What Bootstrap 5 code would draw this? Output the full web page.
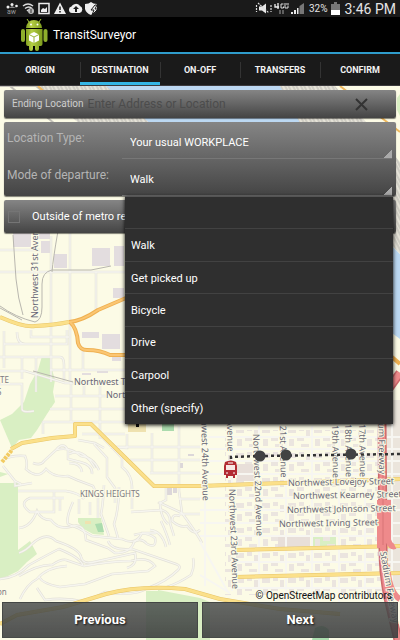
<!DOCTYPE html>
<html lang="en">
<head>
<meta charset="utf-8">
<meta name="viewport" content="width=device-width, initial-scale=1">
<title>TransitSurveyor</title>
<link href="https://cdn.jsdelivr.net/npm/bootstrap@5.3.0/dist/css/bootstrap.min.css" rel="stylesheet">
<style>
  body { font-family: Roboto, "Liberation Sans", sans-serif; font-size: 11px; line-height: 16px; background: #000; color: #fff; }
  .status-bar { height: 17px; background: #1a1a1a; font-size: 10px; color: #e4e4e4; }
  .status-bar .clock { font-size: 14px; }
  .app-bar { height: 37px; background: #000; border-bottom: 2px solid #2f9ccb; font-size: 12px; }
  .tab-strip { height: 32px; background: #1a1a1a; border-bottom: 1px solid #3c3a3d; }
  .tab-strip .nav-item { position: relative; flex: 1 1 0; }
  .tab-strip .nav-item + .nav-item::before { content: ""; position: absolute; left: 0; top: 8px; bottom: 7px; width: 1px; background: #333; }
  .tab-strip .nav-link { color: #f2f2f2; font-size: 9px; font-weight: 700; border-top: 3px solid transparent; border-bottom: 3px solid transparent; border-radius: 0; }
  .tab-strip .nav-link.active { border-bottom-color: #33b5e5; }
  .map-canvas { position: absolute; inset: 0; width: 100%; height: 100%; }
  .panel { background: linear-gradient(#858585, #444); border-radius: 2px; box-shadow: 0 1px 1px rgba(0,0,0,.5); }
  .panel-address { height: 28px; }
  .address-label { color: #cdcdcd; font-size: 10px; }
  .address-input { background: none; border: 0; color: #fff; font-size: 12px; outline-offset: -2px; }
  .address-input::placeholder { color: #4c4c4c; opacity: 1; }
  .spinner-grid { display: grid; grid-template-columns: 118px 1fr; grid-auto-rows: 37px; }
  .spinner-grid label { color: #b4b4b4; font-size: 12px; padding: 8px 0 0 3px; }
  .spinner-select { appearance: none; border: 0; border-bottom: 1px solid #777; color: #fff; font-size: 11px; padding: 6px 8px 0;
    background: linear-gradient(135deg, transparent 50%, #aaa 50%) right bottom / 8px 8px no-repeat; }
  .spinner-select option { color: #fff; background: #2f2f2f; }
  .choice-list { position: absolute; left: 121px; right: 3px; top: 100%; z-index: 5; display: grid; grid-template-rows: repeat(7, 1fr); height: 228px;
    background: #2f2f2f; box-shadow: 0 1px 4px #000; border-top: 1px solid #555; }
  .choice-list button { background: none; border: 0; border-bottom: 1px solid #424242; color: #fff; text-align: left; padding: 2px 6px 0; }
  .choice-list button:last-child { border-bottom: 0; }
  .panel-check { height: 33px; }
  .metro-check { appearance: none; width: 12px; height: 12px; border: 1px solid #757575; margin: 0; }
  .metro-check:checked { background: #33b5e5; }
  .attribution { color: #111; font-size: 10px; line-height: 12px; }
  .button-row { gap: 4px; padding: 0 2px 2px; }
  .nav-button { height: 36px; border: 1px solid rgba(65,68,66,.8); background: linear-gradient(rgba(72,76,76,.84), rgba(58,60,60,.88)); color: #fff; font-size: 13px; font-weight: 700; text-shadow: 1px 1px 2px #111; }
  .map-label { font-family: "Noto Sans", "Open Sans", sans-serif; font-size: 9px; fill: #686777; stroke: #fcfbe6; stroke-width: 2px; paint-order: stroke; }
  .district-label { font-size: 8px; fill: #7c7a82; }
</style>
<script src="https://cdn.jsdelivr.net/npm/bootstrap@5.3.0/dist/js/bootstrap.bundle.min.js"></script>
</head>
<body class="d-flex flex-column min-vh-100 overflow-x-hidden">

<div class="status-bar d-flex align-items-center justify-content-between ps-1 pe-1">
  <svg width="98" height="17" viewBox="4 0 98 17" fill="#eee" aria-hidden="true">
    <circle cx="8" cy="7" r="1.5"/><circle cx="12" cy="4.500" r="1.500"/><circle cx="16.500" cy="6" r="1.300"/><path d="M9 8l3-2 4 2z" opacity=".5"/>
    <text x="7" y="14" font-size="7" fill="#999">aw</text>
    <g fill="none" stroke="#ddd" stroke-width="1.500"><path d="M23 6q5-4 10 0M25 8.500q4-3 7 0M27 11q2-2 4 0"/></g>
    <circle cx="31" cy="11" r="3" fill="#bbb"/><path d="M31 9v4" stroke="#333"/>
    <path d="M39 3.500h10v10H39z" fill="none" stroke="#eee" stroke-width="1.500"/><path d="M41 12V10l2-2 2 1 2-2v5z"/>
    <path d="M60 2.500L66 14H54z"/><path d="M60 6.500v3.500M60 11v1.500" stroke="#1a1a1a" stroke-width="1.500"/>
    <path d="M72 13a3.300 3.300 0 0 1-.5-6.500A5 5 0 0 1 80 6a3.700 3.700 0 0 1-.5 7z"/><path d="M76 6l3 3h-2v3h-2V9h-2z" fill="#1a1a1a"/>
    <path d="M85 4q4 0 6-2 2 2 6 2v5q-1 4-6 6-5-2-6-6z"/><path d="M95 5l-4 5h3l-2 5 6-6h-3l2-4z" stroke="#1a1a1a"/>
  </svg>
  <div class="d-flex align-items-center gap-1">
    <svg width="50" height="17" viewBox="257 0 50 17" fill="#e8e8e8" aria-hidden="true">
      <path d="M261 6.500h3l4-3v10l-4-3h-3z"/><path d="M260 3l11 10M258.500 5v7M273 5v7" stroke="#ddd" stroke-width="1.200" stroke-dasharray="2 1"/>
      <path d="M277 4v3h4M280 3v6" fill="none" stroke="#eee" stroke-width="1.300"/><path d="M285.500 4H283v4h2.500V6.500M287 3v5h3V5.500M291 4h-3" fill="none" stroke="#ddd"/>
      <path d="M282 10v4M285 10v4" stroke="#777" stroke-width="1.500"/>
      <path d="M293 14v-2h2v2zM296 14v-4h2v4zM299 14V8h1.500v6z"/><path d="M301.500 14V6l4.500-3v11z" fill="#777"/>
    </svg>
    <span>32%</span>
    <svg width="9" height="13" viewBox="0 0 9 13" aria-hidden="true"><path d="M3 0h3v2h3v6H0V2h3z" fill="#777"/><path d="M0 8h9v5H0z" fill="#fff"/></svg>
    <span class="clock">3:46 PM</span>
  </div>
</div>

<header class="app-bar d-flex align-items-center gap-1 ps-3">
  <svg class="ms-1" width="29" height="34" viewBox="20 18 29 34" aria-hidden="true">
    <defs><linearGradient id="robot" x2="1"><stop stop-color="#829e20"/><stop offset=".35" stop-color="#b5cf45"/><stop offset="1" stop-color="#7d9b1d"/></linearGradient></defs>
    <path d="M29 22l-2-3M39 22l2-3" stroke="#a4c639"/>
    <path d="M26 28q1-8 8-8t8 8z" fill="url(#robot)"/>
    <circle cx="31" cy="24.500" r="1" fill="#fff"/><circle cx="37.500" cy="24.500" r="1" fill="#fff"/>
    <rect x="21" y="29" width="4" height="13" rx="2" fill="#8eae2c"/><rect x="43.500" y="29" width="4" height="13" rx="2" fill="#8eae2c"/>
    <path d="M26 29h16.500v15q0 2-2 2H39v3q0 2-2 2t-2-2v-3h-2v3q0 2-2 2t-2-2v-3h-1q-2 0-2-2z" fill="url(#robot)"/>
    <path d="M34 32l5 2.500v6L34 43l-5-2.500v-6z" fill="#fff"/><path d="M29 34.500l5 2.500 5-2.500M34 37v6" fill="none" stroke="#9ab53b"/>
  </svg>
  <span>TransitSurveyor</span>
</header>

<ul class="tab-strip nav flex-nowrap">
  <li class="nav-item"><a class="nav-link h-100 p-0 d-flex align-items-center justify-content-center" href="#origin">ORIGIN</a></li>
  <li class="nav-item"><a class="nav-link active h-100 p-0 d-flex align-items-center justify-content-center" href="#destination" aria-current="page">DESTINATION</a></li>
  <li class="nav-item"><a class="nav-link h-100 p-0 d-flex align-items-center justify-content-center" href="#onoff">ON-OFF</a></li>
  <li class="nav-item"><a class="nav-link h-100 p-0 d-flex align-items-center justify-content-center" href="#transfers">TRANSFERS</a></li>
  <li class="nav-item"><a class="nav-link h-100 p-0 d-flex align-items-center justify-content-center" href="#confirm">CONFIRM</a></li>
</ul>

<main class="position-relative flex-grow-1 d-flex flex-column justify-content-between overflow-hidden">
  <svg class="map-canvas" viewBox="0 86 400 554" preserveAspectRatio="xMidYMid slice" role="img" aria-label="Street map of Northwest Portland">
    <defs>
      <pattern id="blocks" width="26" height="25" patternUnits="userSpaceOnUse">
        <path d="M2 3h8v5H2zM13 2h5v4h-5zM20 5h4v7h-4zM3 14h5v7H3zM11 12h7v4h-7zM15 19h8v3h-8z" fill="#ebe5df"/>
      </pattern>
      <pattern id="yard" width="7" height="7" patternUnits="userSpaceOnUse" patternTransform="rotate(-27)">
        <path d="M0 0h7v7H0z" fill="#e6e3d8"/><path d="M1 0v7M5 0v7" stroke="#b9b8b0"/>
      </pattern>
    </defs>
    <path d="M0 86h400v554H0z" fill="#fcfbe6"/>
    <!-- parks -->
    <g fill="#d9efc3">
      <path d="M0 420l12-6 12-12 6-18 8-14 4-14h9v10l4 14-2 12 2 10-8 12-10 16-6 8-12 2-7 8z"/>
      <path d="M0 483h18v88l-10 5-8 3zM18 550l12-9 7 13-10 8-9 9zM0 472l8 2-8 3zM146 591h12v49h-12zM158 590l42 8v42h-42zM200 598l10 4v38h-10z"/>
      <path d="M78 518h23l3 17-11-1-11-6-4-6zM311 537h25v9h-25z"/><path d="M397 98l3-4v22l-3-6z"/>
    </g>
    <path d="M305 537h5v10h-5zM95 524l7-1 2 9h-6zM315 628q8-5 14 2v10h-17zM162 424h12v7h-12z" fill="#acdcae"/>
    <path d="M85 521h6v3h-6zM128 422h18v10h-18z" fill="#efe2b0"/>
    <!-- river and railway yard -->
    <path d="M105 86h175l14 18 16 20H150zM392 246l8 8v85l-8-6z" fill="#bcd8f2"/>
    <path d="M36 86h70l45 38-70 1zM280 86h55l65 76v92l-8-9-7-70-60-52h-25z" fill="url(#yard)"/>
    <path d="M0 86h36l40 32M10 86l45 38" stroke="#c3c0b8" fill="none" stroke-width="2"/>
    <path d="M38 86l26 24M340 86l60 46" stroke="#f0b95e" stroke-width="2"/>
    <!-- buildings -->
    <path d="M225 430h158v165H225z" fill="url(#blocks)"/><path d="M385 400h15v190h-15z" fill="#ebe5dc"/>
    <path d="M237 464h18v17h-18zM278 535h32v14h-32z" fill="#e8dfd9"/>
    <path d="M13 232h18v15H13zM34 233h16v6H34zM41 241h10v12H41zM54 254h13v14H54zM92 248h18v18H92zM114 246h10v20h-10zM113 288h11v10h-11zM102 334h18v15h-18zM112 357h9v4h-9zM82 332h17v6H82zM97 370h11v3H97zM82 373h9v2h-9z" fill="#e3dddf"/>
    <path d="M188 454h6v2h-6zM180 463h3v5h-3zM167 488h5v7h-5zM173 488h4v5h-4z" fill="#dcd7d9"/>
    <!-- local streets: a grey casing with a pale fill on top -->
    <defs>
      <g id="streets" fill="none">
        <path d="M0 250h40M0 272h125M70 230v150M96 272v40M51 236v146M4 331v37M17 332q0 12 8 12h42V330M4 344h25M31 330v7h38M0 357h60q4 0 4 8v16M0 371h25l40 12h60M22 357v22M36 357v35M0 384h22v25q0 4 12 2M50 370h75M83 350v20M84 379v16M100 379v60M55 396h70M50 409h75M71 380v42h55M43 434v-12h28"/>
        <path d="M82 434h43M110 447h90M127 434v14l-17-1M152 433v40M130 460h70M150 473h50M179 426v65l3 22q16 22 20 30M179 499h21M179 514h21M166 487v13l-6 3 22 10"/>
        <path d="M3 460q8-5 22-4 3 7 1 13 12 11 20 0 8 9 22 7l9 4 16 6 5 11M3 466l12 15v5l17-3M15 481l6 3M33 463q8 3 11-2l12-11q7-9 12 0v9l12 3q13 3 12 12M56 450q13-4 25 6 12 1 18 14M69 454q14-7 26 14M69 463q12 0 13 9M94 444l13 14v19l8 11v15M99 434l23 24v9q11 8 10 24v18M78 440l17 3 9 5"/>
        <path d="M18 491h48q13 2 18 8M54 492v20H30q-12-9 0-14h34M60 499v12M73 502q-7 15-5 22l10 4 14 8 30 3q14 7 20-6h14M79 499v15M90 502v13M98 498v20M104 485q-1 20-3 29l8 22M119 487q0 22-5 37l4 14M131 512l31-2q9 3 8 13l4 13"/>
        <path d="M19 528q12-1 18-17 4 9 14 9 8 11 22 6 12-3 13 14l22 8 7 5q16 0 19-11 7-5 13 2 10 5 8-6-9-7-21-3M19 553q8-3 13-9 14-13 24-3 24 8 25 16 2 8 13 5l41-9q3 12-8 15M19 576q20-12 33-11 9-6 14-5l18 6q28-5 47-5 17-5 24 5l-7 5-36 3-27 10-25 3q-17-3-21-10M0 579q16-1 29-14 18-10 30-16 20 8 24 16M20 599q7-15 17-20 10-12 30-13M37 588l8 12q20-3 40 2l20-10q28 5 43-4 19-7 30-18 4-4-2-6l-44-15q-20 2-24-8"/>
        <path d="M180 516q-8-3-8 5 8 7 15 5 7 10 13 4M161 521q6 13 9 24M193 558q2 8-2 17-12 8-24 12M160 501q0 16 8 23M150 530q12 1 16 17"/>
      </g>
    </defs>
    <use href="#streets" stroke="#e3e1d8" stroke-width="2.500"/>
    <use href="#streets" stroke="#f6f5ef" stroke-width="1.300"/>
    <g fill="none" stroke="#f7f6f1" stroke-width="2">
      <path d="M205 426v160M232 426v165M259 426v175M286 426v180M312 426v175M339 426v180M365 426v180M392 380v210M200 437h200M200 449h200M200 461h200M200 474h200M200 498h200M200 510h200M200 523h200M200 536h200M230 562h170M230 588h170M200 542l28 50M200 575l30 18"/>
    </g>
    <path d="M13 235l3 44q2 20 7 36M0 306q15 11 35 16 7-2 7-15V284q0-12 10-14h39l20-4M58 231q-5 28-6 41M0 308l22 12M33 371l40 11" fill="none" stroke="#b9b7af"/>
    <!-- main roads -->
    <g fill="none" stroke-linejoin="round">
      <g stroke="#e8c568" stroke-width="4"><path d="M0 317q25 11 35 9 20-1 34-4M11 449l11-6 30-5 23-2V424h16l63 62h46M200 486l200-7M0 624l17-9 46-8 43-13q34-9 79-5l35 10 60 10 60 5M236 550l164-4M236 577l164-4" /></g>
      <g stroke="#fbe08a" stroke-width="3"><path d="M0 317q25 11 35 9 20-1 34-4M11 449l11-6 30-5 23-2V424h16l63 62h46M200 486l200-7M0 624l17-9 46-8 43-13q34-9 79-5l35 10 60 10 60 5M236 550l164-4M236 577l164-4"/></g>
      <path d="M69 322q13-1 29-12l28-12M70 322q7 6 8 21 2 7 9 7 13 0 23 5h16M392 357l8 7" stroke="#efb152" stroke-width="4"/>
      <path d="M69 322q13-1 29-12l28-12M70 322q7 6 8 21 2 7 9 7 13 0 23 5h16" stroke="#fbc673" stroke-width="2"/>
      <path d="M400 373l-13 18q-5 14-5 32l1 125q0 25 5 50l10 42" stroke="#cd6a6d" stroke-width="9"/>
      <path d="M400 373l-13 18q-5 14-5 32l1 125q0 25 5 50l10 42M388 500v40q3 8 7 6M380 500v48M387 565q2 28 13 34" stroke="#ee8a8b" stroke-width="6"/>
      <path d="M383 425v120" stroke="#d87577"/>
    </g>
    <path d="M2 462l10-12" stroke="#f2cb62" stroke-width="4" stroke-dasharray="3 1"/>
    <!-- street names -->
    <g class="map-label">
      <text transform="translate(38 318) rotate(-90)">Northwest 31st Avenue</text>
      <text x="74" y="385">Northwest Thurman</text>
      <text x="106" y="398">Northwest Savier</text>
      <text class="district-label" x="80" y="497">KINGS HEIGHTS</text>
      <text class="district-label" x="0" y="383">TE</text><text class="district-label" x="-3" y="395">S</text><text class="district-label" x="-6" y="595">ton</text>
      <text transform="translate(201 401) rotate(89)">Northwest 24th Avenue</text>
      <text transform="translate(227 420) rotate(89)">Avenue</text>
      <text transform="translate(229 489) rotate(88)">Northwest 23rd Avenue</text>
      <text transform="translate(253 434) rotate(88)">Northwest 22nd Avenue</text>
      <text transform="translate(279 379) rotate(89)">Northwest 21st Avenue</text>
      <text transform="translate(332 425) rotate(89)">19th Avenue</text>
      <text transform="translate(345 424) rotate(89)">18th Avenue</text>
      <text transform="translate(359 424) rotate(89)">17th Avenue</text>
      <text transform="translate(378 402) rotate(89)">Stadium Freeway</text>
      <text transform="translate(380 552) rotate(80)">Stadium Freeway</text>
      <text transform="translate(288 486) rotate(-1)">Northwest Lovejoy Street</text>
      <text transform="translate(293 499) rotate(-1)">Northwest Kearney Street</text>
      <text transform="translate(287 513) rotate(-1)">Northwest Johnson Street</text>
      <text transform="translate(279 527) rotate(-1)">Northwest Irving Street</text>
    </g>
    <!-- transit line -->
    <path d="M231 459v-2l30-1 139-2" fill="none" stroke="#333" stroke-width="2.500" stroke-dasharray="3 3"/>
    <g fill="#424242"><circle cx="260" cy="456" r="5.500"/><circle cx="286" cy="455" r="5.500"/><circle cx="351" cy="454" r="5.500"/></g>
    <path d="M136 420h3v7h-3z" fill="#111"/>
    <path d="M225 462q6-3 11 0l1 4v9h-2v3h-2v-2h-5v2h-2v-3h-2v-9z" fill="#b22b33"/><path d="M226 465h9v5h-9z" fill="#f8e7e5"/><path d="M228 463h5M226 473h2M233 473h2" stroke="#fff"/>
  </svg>

  <form class="position-relative d-flex flex-column gap-1 px-1 pt-1">
    <div class="panel panel-address d-flex align-items-center ps-1">
      <label class="address-label ps-1 text-nowrap" for="address">Ending Location</label>
      <input class="address-input flex-grow-1 w-50 p-0 ps-1" id="address" type="text" placeholder="Enter Address or Location">
      <button class="btn p-0 border-0 me-4 px-1 lh-1" type="button" aria-label="Clear address">
        <svg width="13" height="13" viewBox="0 0 13 13"><path d="M1 1l11 11M12 1L1 12" stroke="#333" stroke-width="2"/></svg>
      </button>
    </div>

    <div class="panel position-relative">
      <div class="spinner-grid pe-1">
        <label for="type">Location Type:</label>
        <select class="spinner-select" id="type"><option>Your usual WORKPLACE</option></select>
        <label for="mode">Mode of departure:</label>
        <select class="spinner-select" id="mode"><option>Walk</option></select>
      </div>
      <div class="choice-list" role="listbox" aria-label="Mode of departure">
        <button type="button" role="option" aria-label="None"></button>
        <button type="button" role="option">Walk</button>
        <button type="button" role="option">Get picked up</button>
        <button type="button" role="option">Bicycle</button>
        <button type="button" role="option">Drive</button>
        <button type="button" role="option">Carpool</button>
        <button type="button" role="option">Other (specify)</button>
      </div>
    </div>

    <div class="panel panel-check d-flex align-items-center ps-1 gap-2">
      <input class="metro-check" id="metro" type="checkbox">
      <label class="ps-1 text-nowrap" for="metro">Outside of metro region</label>
    </div>
  </form>

  <div class="position-relative">
    <div class="attribution text-end pe-2">© OpenStreetMap contributors</div>
    <div class="button-row d-flex">
      <button class="nav-button col" type="button">Previous</button>
      <button class="nav-button col" type="button">Next</button>
    </div>
  </div>
</main>
</body>
</html>
